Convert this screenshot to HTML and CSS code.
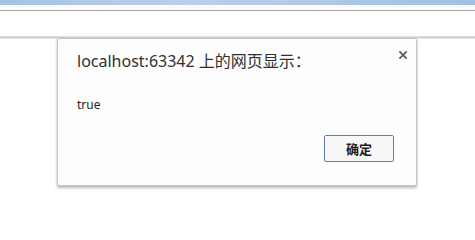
FILE: index.html
```html
<!DOCTYPE html>
<html lang="zh-CN">
<head>
<meta charset="utf-8">
<title>alert</title>
<link rel="stylesheet" href="styles.css">
</head>
<body>
<div class="chrome">
  <div class="tabbar"></div>
  <div class="gap"></div>
  <div class="toolbar-line"></div>
  <div class="page-top"></div>
  <div class="content-edge"></div>
</div>
<div class="dialog">
  <button class="close" aria-label="关闭">
    <svg width="8" height="8" viewBox="0 0 8 8"><path d="M1 1L7 7M7 1L1 7" stroke="#606060" stroke-width="1.8" stroke-linecap="square"/></svg>
  </button>
  <div class="title">localhost:63342 上的网页显示：</div>
  <div class="message">true</div>
  <div class="actions">
    <button class="ok">确定</button>
  </div>
</div>
</body>
</html>
```
FILE: styles.css
```css
html, body {
  margin: 0;
  padding: 0;
  background: #ffffff;
  width: 475px;
  height: 229px;
  overflow: hidden;
  font-family: "Noto Sans", "Noto Sans CJK SC", sans-serif;
}
.chrome {
  display: flex;
  flex-direction: column;
}
.tabbar {
  height: 5px;
  background: linear-gradient(to right, #a9c2e2, #b9d0ec 40%, #a6bfe0);
}
.gap {
  height: 5px;
  background: #fbfbfb;
}
.toolbar-line {
  height: 1px;
  background: #a7a7a7;
}
.page-top {
  height: 25px;
  background: #ffffff;
}
.content-edge {
  height: 3px;
  background: linear-gradient(to bottom, #e4e4e4, #cfcfcf 50%, #ededed);
}
.dialog {
  position: absolute;
  left: 57px;
  top: 38px;
  width: 360px;
  height: 148px;
  box-sizing: border-box;
  background: #fdfdfd;
  border: 1px solid #c4c4c4;
  border-radius: 2px;
  box-shadow: 0 2px 3px rgba(0, 0, 0, 0.28);
  display: flex;
  flex-direction: column;
  padding: 0 22px 0 19px;
}
.close {
  position: absolute;
  right: 7px;
  top: 9px;
  width: 13px;
  height: 13px;
  padding: 0;
  border: 0;
  background: transparent;
  display: flex;
  align-items: center;
  justify-content: center;
}
.title {
  margin-top: 12px;
  font-size: 16px;
  line-height: 20px;
  color: #303030;
}
.message {
  margin-top: 26px;
  font-size: 12px;
  line-height: 16px;
  color: #222222;
}
.actions {
  display: flex;
  justify-content: flex-end;
  margin-top: 22px;
}
.ok {
  width: 70px;
  height: 27px;
  margin: 0;
  padding: 0;
  border: 1px solid #5f7fb4;
  border-radius: 2px;
  background: #f8f8f8;
  font-family: "Noto Sans CJK SC", sans-serif;
  font-size: 13px;
  font-weight: bold;
  color: #1e1e1e;
}
```
